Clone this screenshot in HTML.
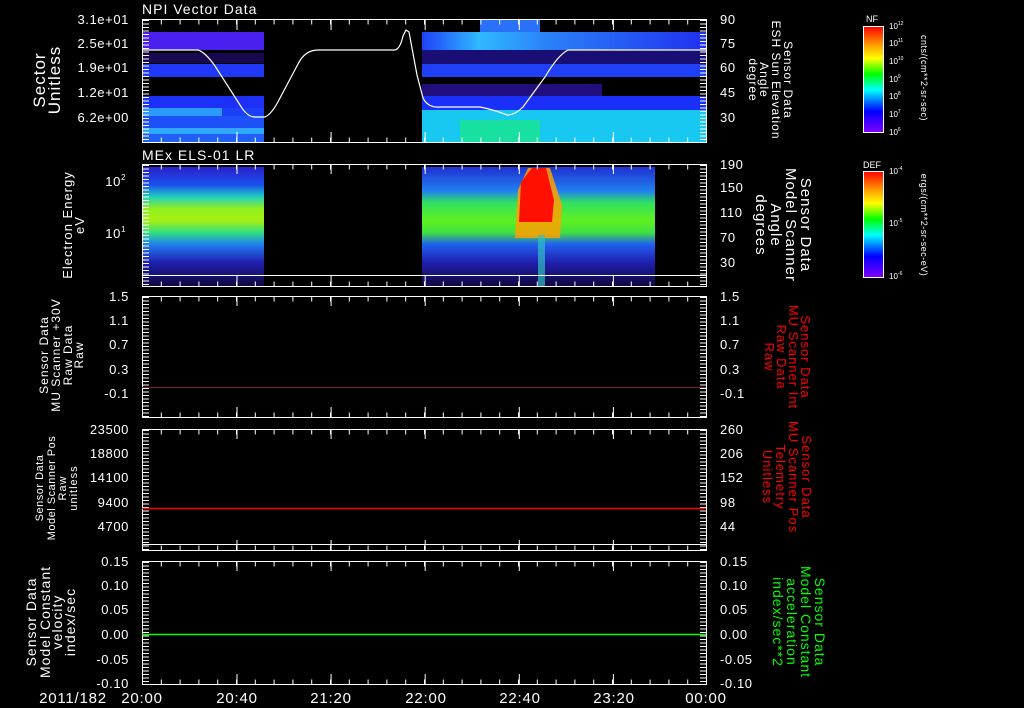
<!DOCTYPE html>
<html><head><meta charset="utf-8"><style>
html,body{margin:0;padding:0;background:#000;}
svg{display:block;font-family:"Liberation Sans",sans-serif;}
</style></head><body>
<svg width="1024" height="708" viewBox="0 0 1024 708" xmlns="http://www.w3.org/2000/svg">
<defs>
<linearGradient id="rb" x1="0" y1="0" x2="0" y2="1">
<stop offset="0" stop-color="#ff0000"/><stop offset="0.17" stop-color="#ff9900"/><stop offset="0.3" stop-color="#ffff00"/><stop offset="0.45" stop-color="#00ff00"/><stop offset="0.6" stop-color="#00ffff"/><stop offset="0.8" stop-color="#0000ff"/><stop offset="1" stop-color="#8000ff"/>
</linearGradient>
<linearGradient id="s2" x1="0" y1="0" x2="0" y2="1">
<stop offset="0" stop-color="#2a20c8"/><stop offset="0.15" stop-color="#1a50f0"/><stop offset="0.25" stop-color="#20d0c0"/><stop offset="0.35" stop-color="#90f020"/><stop offset="0.45" stop-color="#a8f010"/><stop offset="0.55" stop-color="#30e080"/><stop offset="0.65" stop-color="#2080f0"/><stop offset="0.8" stop-color="#2020b0"/><stop offset="1" stop-color="#100840"/>
</linearGradient>
<linearGradient id="s2b" x1="0" y1="0" x2="0" y2="1">
<stop offset="0" stop-color="#2030d0"/><stop offset="0.2" stop-color="#2080f0"/><stop offset="0.3" stop-color="#30e060"/><stop offset="0.45" stop-color="#60f020"/><stop offset="0.55" stop-color="#40e040"/><stop offset="0.65" stop-color="#2060f0"/><stop offset="0.8" stop-color="#2020b0"/><stop offset="1" stop-color="#100840"/>
</linearGradient>
<linearGradient id="c1" x1="0" y1="0" x2="1" y2="0">
<stop offset="0" stop-color="#2040f8"/><stop offset="0.2" stop-color="#30b8ff"/><stop offset="0.45" stop-color="#2a80f8"/><stop offset="1" stop-color="#2030f0"/>
</linearGradient>
</defs>

<!-- Panel 1 data -->
<g>
<rect x="142" y="32" width="122" height="18" fill="#4a20f0"/>
<rect x="142" y="53" width="122" height="10" fill="#3010a0" opacity="0.5"/>
<rect x="142" y="64" width="122" height="13" fill="#2038f8"/>
<rect x="142" y="96" width="122" height="12" fill="#1c30f8"/>
<rect x="142" y="108" width="80" height="8" fill="#2a9cff"/>
<rect x="222" y="108" width="42" height="8" fill="#1c40f8"/>
<rect x="142" y="116" width="122" height="12" fill="#1e50f8"/>
<rect x="142" y="128" width="122" height="6" fill="#30a8ff"/>
<rect x="142" y="134" width="122" height="8" fill="#2060f8"/>
<rect x="422" y="32" width="284" height="18" fill="url(#c1)"/>
<rect x="480" y="20" width="60" height="12" fill="#2a70f8"/>
<rect x="422" y="50" width="284" height="14" fill="#2a18c0" opacity="0.6"/>
<rect x="422" y="64" width="284" height="13" fill="#2040f8"/>
<rect x="422" y="84" width="180" height="12" fill="#3a18d0" opacity="0.6"/>
<rect x="422" y="96" width="284" height="14" fill="#1a30f8"/>
<rect x="422" y="110" width="284" height="32" fill="#18c8f0"/>
<rect x="460" y="120" width="80" height="22" fill="#18e0a0"/>
</g>
<!-- Panel 2 data -->
<rect x="142" y="167" width="122" height="119" fill="url(#s2)"/>
<rect x="422" y="167" width="233" height="119" fill="url(#s2b)"/>
<path d="M515 238 L518 190 L528 168 L550 168 L562 205 L560 238 Z" fill="#ffa000" opacity="0.85"/>
<path d="M519 222 L521 182 L532 168 L546 168 L554 200 L552 222 Z" fill="#ff1000"/>
<rect x="538" y="235" width="7" height="51" fill="#30c0c0" opacity="0.7"/>

<!-- curve -->
<path d="M142 50 L198 50 Q205 52 215 66 L240 105 Q247 117 255 117 L265 117 Q272 114 280 98 L298 64 Q305 50 318 50 L395 50 Q400 49 403 36 L406 30 L409 32 L417 75 L423 98 Q428 108 440 107 L480 107 Q495 110 507 115 Q515 115 523 107 L545 77 Q558 55 568 50 L706 50" fill="none" stroke="#fff" stroke-width="1.2"/>

<g stroke="#fff" fill="none" stroke-width="1">
<rect x="142.5" y="19.5" width="564" height="123"/>
<rect x="142.5" y="164.5" width="564" height="122"/>
<line x1="142" y1="275.5" x2="707" y2="275.5"/>
<rect x="142.5" y="296.5" width="564" height="121"/>
<rect x="142.5" y="429.5" width="564" height="121"/>
<line x1="142" y1="544.5" x2="707" y2="544.5"/>
<rect x="142.5" y="561.5" width="564" height="123"/>
</g>
<g stroke="#fff">
<g stroke-width="5" stroke-dasharray="1 17.8">
<line x1="142" y1="22" x2="707" y2="22"/><line x1="142" y1="140" x2="707" y2="140"/>
<line x1="142" y1="167" x2="707" y2="167"/><line x1="142" y1="284" x2="707" y2="284"/>
<line x1="142" y1="299" x2="707" y2="299"/><line x1="142" y1="415" x2="707" y2="415"/>
<line x1="142" y1="432" x2="707" y2="432"/><line x1="142" y1="548" x2="707" y2="548"/>
<line x1="142" y1="564" x2="707" y2="564"/><line x1="142" y1="682" x2="707" y2="682"/>
</g>
<g stroke-width="10" stroke-dasharray="1 93.1">
<line x1="236.5" y1="25" x2="707" y2="25"/><line x1="236.5" y1="137" x2="707" y2="137"/>
<line x1="236.5" y1="169" x2="707" y2="169"/><line x1="236.5" y1="281" x2="707" y2="281"/>
<line x1="236.5" y1="301" x2="707" y2="301"/><line x1="236.5" y1="412" x2="707" y2="412"/>
<line x1="236.5" y1="434" x2="707" y2="434"/><line x1="236.5" y1="545" x2="707" y2="545"/>
<line x1="236.5" y1="566" x2="707" y2="566"/><line x1="236.5" y1="679" x2="707" y2="679"/>
</g>
<g stroke-width="6" stroke-dasharray="1 2.5">
<line x1="146" y1="20" x2="146" y2="142"/><line x1="703" y1="20" x2="703" y2="142"/>
<line x1="146" y1="165" x2="146" y2="286"/><line x1="703" y1="165" x2="703" y2="286"/>
<line x1="146" y1="297" x2="146" y2="417"/><line x1="703" y1="297" x2="703" y2="417"/>
<line x1="146" y1="430" x2="146" y2="550"/><line x1="703" y1="430" x2="703" y2="550"/>
<line x1="146" y1="562" x2="146" y2="684"/><line x1="703" y1="562" x2="703" y2="684"/>
</g>
</g>
<line x1="142" y1="387.5" x2="706" y2="387.5" stroke="#7a2020" stroke-width="1"/>
<line x1="142" y1="508.5" x2="706" y2="508.5" stroke="#ff0000" stroke-width="1.5"/>
<line x1="142" y1="634.5" x2="706" y2="634.5" stroke="#00ff00" stroke-width="1.5"/>

<g fill="#fff" font-size="14" letter-spacing="1">
<text x="142" y="14">NPI Vector Data</text>
<text x="142" y="160">MEx ELS-01 LR</text>
</g>
<g fill="#fff" font-size="13" text-anchor="end" letter-spacing="0.6">
<text x="129" y="24">3.1e+01</text><text x="129" y="48">2.5e+01</text><text x="129" y="72">1.9e+01</text><text x="129" y="97">1.2e+01</text><text x="129" y="122">6.2e+00</text>
<text x="126" y="186">10<tspan font-size="8" dy="-6">2</tspan></text><text x="126" y="238">10<tspan font-size="8" dy="-6">1</tspan></text>
<text x="129" y="301">1.5</text><text x="129" y="325">1.1</text><text x="129" y="349">0.7</text><text x="129" y="374">0.3</text><text x="129" y="398">-0.1</text>
<text x="129" y="434">23500</text><text x="129" y="458">18800</text><text x="129" y="482">14100</text><text x="129" y="507">9400</text><text x="129" y="531">4700</text>
<text x="129" y="566">0.15</text><text x="129" y="590">0.10</text><text x="129" y="614">0.05</text><text x="129" y="639">0.00</text><text x="129" y="664">-0.05</text><text x="129" y="688">-0.10</text>
</g>
<g fill="#fff" font-size="13" letter-spacing="0.6">
<text x="720" y="24">90</text><text x="720" y="48">75</text><text x="720" y="72">60</text><text x="720" y="97">45</text><text x="720" y="122">30</text>
<text x="720" y="169">190</text><text x="720" y="192">150</text><text x="720" y="217">110</text><text x="720" y="242">70</text><text x="720" y="267">30</text>
<text x="720" y="301">1.5</text><text x="720" y="325">1.1</text><text x="720" y="349">0.7</text><text x="720" y="374">0.3</text><text x="720" y="398">-0.1</text>
<text x="720" y="434">260</text><text x="720" y="458">206</text><text x="720" y="482">152</text><text x="720" y="507">98</text><text x="720" y="531">44</text>
<text x="720" y="566">0.15</text><text x="720" y="590">0.10</text><text x="720" y="614">0.05</text><text x="720" y="639">0.00</text><text x="720" y="664">-0.05</text><text x="720" y="688">-0.10</text>
</g>
<g fill="#fff" font-size="15" text-anchor="middle" letter-spacing="0.8">
<text x="73" y="703">2011/182</text>
<text x="142" y="703">20:00</text><text x="237" y="703">20:40</text><text x="331" y="703">21:20</text><text x="426" y="703">22:00</text><text x="520" y="703">22:40</text><text x="614" y="703">23:20</text><text x="706" y="703">00:00</text>
</g>
<g fill="#fff" text-anchor="middle" letter-spacing="1">
<text font-size="17" transform="translate(45,80) rotate(-90)">Sector</text>
<text font-size="17" transform="translate(60,80) rotate(-90)">Unitless</text>
<text font-size="13" transform="translate(72,225) rotate(-90)">Electron Energy</text>
<text font-size="13" transform="translate(84,225) rotate(-90)">eV</text>
<text font-size="12" transform="translate(48,355) rotate(-90)">Sensor Data</text>
<text font-size="12" transform="translate(60,355) rotate(-90)">MU Scanner +30V</text>
<text font-size="12" transform="translate(72,355) rotate(-90)">Raw Data</text>
<text font-size="12" transform="translate(83,355) rotate(-90)">Raw</text>
<text font-size="11" transform="translate(43,488) rotate(-90)" letter-spacing="0.5">Sensor Data</text>
<text font-size="11" transform="translate(55,488) rotate(-90)" letter-spacing="0.5">Model Scanner Pos</text>
<text font-size="11" transform="translate(66,488) rotate(-90)">Raw</text>
<text font-size="11" transform="translate(77,488) rotate(-90)">unitless</text>
<text font-size="14" transform="translate(36,622) rotate(-90)">Sensor Data</text>
<text font-size="14" transform="translate(50,622) rotate(-90)">Model Constant</text>
<text font-size="14" transform="translate(62,622) rotate(-90)">velocity</text>
<text font-size="14" transform="translate(75,622) rotate(-90)">index/sec</text>
</g>
<g text-anchor="middle" letter-spacing="1">
<g fill="#fff" font-size="12">
<text transform="translate(784,80) rotate(90)">Sensor Data</text>
<text transform="translate(772,80) rotate(90)">ESH Sun Elevation</text>
<text transform="translate(760,80) rotate(90)">Angle</text>
<text transform="translate(749,80) rotate(90)">degree</text>
</g>
<g fill="#fff" font-size="15">
<text transform="translate(801,225) rotate(90)">Sensor Data</text>
<text transform="translate(786,225) rotate(90)">Model Scanner</text>
<text transform="translate(771,225) rotate(90)">Angle</text>
<text transform="translate(756,225) rotate(90)">degrees</text>
</g>
<g fill="#ff0000" font-size="13">
<text transform="translate(801,357) rotate(90)">Sensor Data</text>
<text transform="translate(789,357) rotate(90)">MU Scanner Int</text>
<text transform="translate(777,357) rotate(90)">Raw Data</text>
<text transform="translate(765,357) rotate(90)">Raw</text>
<text transform="translate(802,477) rotate(90)">Sensor Data</text>
<text transform="translate(789,477) rotate(90)">MU Scanner Pos</text>
<text transform="translate(776,477) rotate(90)">Telemetry</text>
<text transform="translate(763,477) rotate(90)">Unitless</text>
</g>
<g fill="#00ff00" font-size="14">
<text transform="translate(815,622) rotate(90)">Sensor Data</text>
<text transform="translate(801,622) rotate(90)">Model Constant</text>
<text transform="translate(787,622) rotate(90)">acceleration</text>
<text transform="translate(773,622) rotate(90)">index/sec**2</text>
</g>
</g>
<rect x="863.5" y="26.5" width="20" height="106" fill="url(#rb)" stroke="#fff"/>
<rect x="863.5" y="171.5" width="20" height="106" fill="url(#rb)" stroke="#fff"/>
<g fill="#fff" font-size="9">
<text x="866" y="22">NF</text>
<text x="863" y="168">DEF</text>
<g font-size="8">
<text x="889" y="29">10<tspan font-size="5" dy="-4">12</tspan></text>
<text x="889" y="46">10<tspan font-size="5" dy="-4">11</tspan></text>
<text x="889" y="64">10<tspan font-size="5" dy="-4">10</tspan></text>
<text x="889" y="82">10<tspan font-size="5" dy="-4">9</tspan></text>
<text x="889" y="99">10<tspan font-size="5" dy="-4">8</tspan></text>
<text x="889" y="117">10<tspan font-size="5" dy="-4">7</tspan></text>
<text x="889" y="135">10<tspan font-size="5" dy="-4">6</tspan></text>
<text x="889" y="174">10<tspan font-size="5" dy="-4">-4</tspan></text>
<text x="889" y="226">10<tspan font-size="5" dy="-4">-5</tspan></text>
<text x="889" y="279">10<tspan font-size="5" dy="-4">-6</tspan></text>
</g>
<text font-size="9" text-anchor="middle" letter-spacing="0.5" transform="translate(921,78) rotate(90)">cnts/(cm**2-sr-sec)</text>
<text font-size="9" text-anchor="middle" letter-spacing="0.5" transform="translate(921,225) rotate(90)">ergs/(cm**2-sr-sec-eV)</text>
</g>
</svg>
</body></html>
